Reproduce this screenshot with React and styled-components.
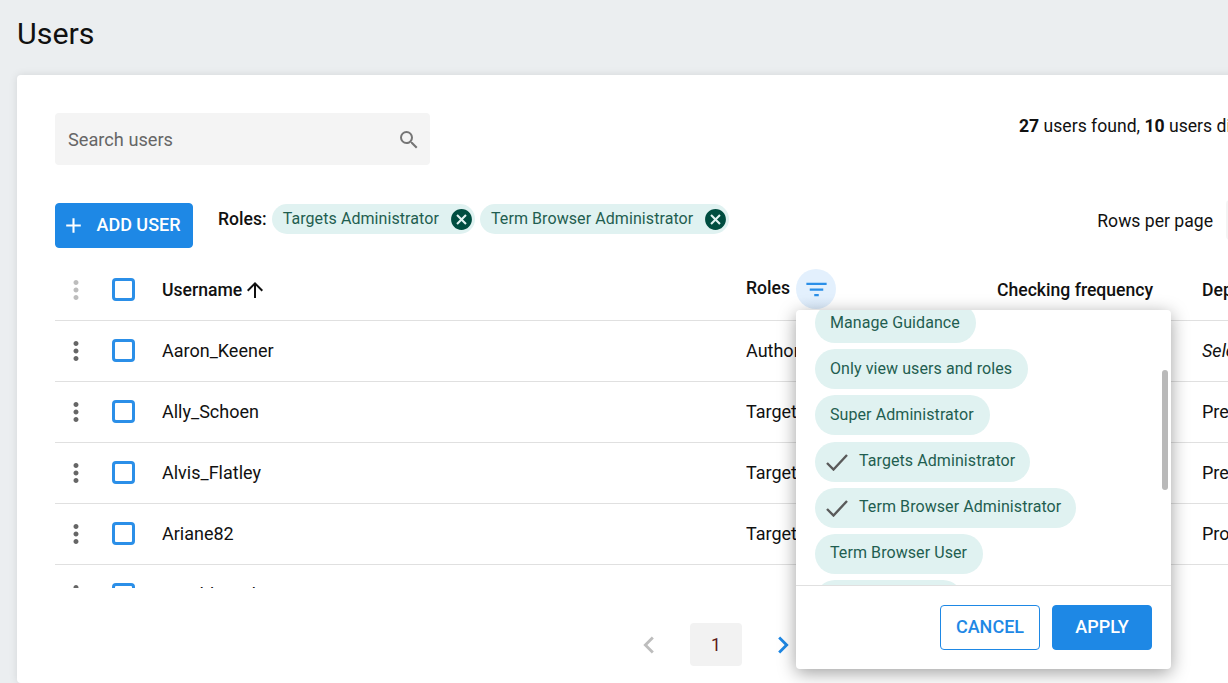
import styled, { createGlobalStyle } from 'styled-components'
import {
  MdAdd,
  MdArrowUpward,
  MdCancel,
  MdChevronLeft,
  MdChevronRight,
  MdFilterList,
  MdMoreVert,
  MdSearch
} from 'react-icons/md'

const users = [
  { name: 'Aaron_Keener', role: 'Authors', frequency: 'Daily', department: 'Select department', placeholder: true },
  { name: 'Ally_Schoen', role: 'Targets Administrator', frequency: 'Daily', department: 'Prevention' },
  { name: 'Alvis_Flatley', role: 'Targets Administrator', frequency: 'Daily', department: 'Prevention' },
  { name: 'Ariane82', role: 'Targets Administrator', frequency: 'Daily', department: 'Production' },
  { name: 'Arnaldo.Hahn', role: 'Targets Administrator', frequency: 'Daily', department: 'Production' }
]

const roleOptions = [
  { label: 'Manage Guidance' },
  { label: 'Only view users and roles' },
  { label: 'Super Administrator' },
  { label: 'Targets Administrator', selected: true },
  { label: 'Term Browser Administrator', selected: true },
  { label: 'Term Browser User' },
  { label: 'Translation User' }
]

const GlobalStyle = createGlobalStyle`
  html, body {
    margin: 0;
    height: 683px;
    overflow: hidden;
    background: #ebeef0;
    font-family: Roboto, "Liberation Sans", sans-serif;
    color: #111;
  }
`

const Page = styled.div`
  width: 1432px;
  height: 683px;
  padding-left: 17px;
  box-sizing: border-box;
`

const Title = styled.h1`
  margin: 0;
  height: 75px;
  line-height: 68px;
  font-size: 30.4px;
  font-weight: 400;
  color: #111;
`

const Card = styled.main`
  width: 1398px;
  height: 608px;
  box-sizing: border-box;
  padding: 38px 38px 0;
  background: #fff;
  border-radius: 4px;
  box-shadow: 0 0 8px rgba(0, 0, 0, 0.1);
`

const TopRow = styled.div`
  display: flex;
  height: 52px;
  margin-bottom: 38px;
`

const SearchBox = styled.div`
  width: 375px;
  height: 52px;
  box-sizing: border-box;
  padding: 1px 9px 0 13px;
  display: flex;
  align-items: center;
  justify-content: space-between;
  background: #f4f4f4;
  border-radius: 4px;
  color: #666;
  font-size: 18.2px;
  svg {
    color: #757575;
  }
`

const ResultCount = styled.div`
  margin-left: 589px;
  padding-top: 3px;
  font-size: 17.6px;
  b {
    font-weight: 700;
  }
`

const Toolbar = styled.div`
  display: flex;
  align-items: flex-start;
  height: 57px;
`

const PrimaryButton = styled.button`
  display: flex;
  align-items: center;
  justify-content: center;
  width: ${({ $width }) => $width}px;
  height: 45px;
  padding: 0 0 2px;
  border: 1px solid #1e88e5;
  border-radius: 4px;
  background: #1e88e5;
  color: #fff;
  font-family: inherit;
  font-size: 18px;
  font-weight: 500;
`

const OutlineButton = styled(PrimaryButton)`
  background: #fff;
  color: #1e88e5;
`

const AddIcon = styled(MdAdd)`
  margin: 2px 10px 0 -6px;
`

const FilterLabel = styled.span`
  margin: 6px 5px 0 25px;
  font-size: 17.6px;
  font-weight: 500;
  line-height: 20px;
`

const ActiveChip = styled.span`
  display: flex;
  align-items: center;
  height: 30px;
  box-sizing: border-box;
  margin: 1px 5px 0 0;
  padding: 0 1px 2px 11px;
  border-radius: 15px;
  background: #e0f2f1;
  color: #1f5e50;
  font-size: 16px;
  letter-spacing: 0.08px;
  svg {
    margin: 2px 0 0 10px;
    color: #004d40;
  }
`

const RowsPerPage = styled.div`
  margin: -3px 0 0 auto;
  display: flex;
  align-items: center;
  gap: 13px;
  font-size: 17.6px;
`

const RowsLabel = styled.span`
  margin-top: 2px;
`

const RowsSelect = styled.div`
  width: 151px;
  height: 40px;
  box-sizing: border-box;
  padding: 0 12px;
  display: flex;
  align-items: center;
  background: #f4f4f4;
  border-radius: 4px;
`

const Columns = styled.div`
  display: grid;
  grid-template-columns: 57px 50px 584px 251px 205px 1fr;
  align-items: center;
  height: 61px;
  box-sizing: border-box;
  border-bottom: 1px solid #e0e0e0;
  font-size: 18px;
`

const HeadRow = styled(Columns)`
  font-size: 17.6px;
  font-weight: 500;
`

const RowsViewport = styled.div`
  height: 267px;
  overflow: hidden;
`

const KebabCell = styled.div`
  width: 42px;
  display: flex;
  justify-content: center;
  color: ${({ $muted }) => ($muted ? '#bdbdbd' : '#666')};
`

const CheckBox = styled.span`
  display: block;
  width: 23px;
  height: 23px;
  margin-top: -2px;
  box-sizing: border-box;
  border: 3px solid #2b8fe8;
  border-radius: 4px;
`

const SortLabel = styled.div`
  display: flex;
  align-items: center;
  gap: 1px;
`

const RolesHead = styled.div`
  position: relative;
  display: flex;
  align-items: center;
  gap: 6px;
  margin-top: -2px;
`

const RolesText = styled.span`
  margin-top: -3px;
`

const FilterButton = styled.button`
  width: 40px;
  height: 40px;
  padding: 0;
  display: flex;
  align-items: center;
  justify-content: center;
  border: 0;
  border-radius: 50%;
  background: linear-gradient(#e3f0fd, #e3f0fd 70%, #dcecfc);
  color: #2b8fe8;
`

const CellText = styled.div`
  margin-top: -2px;
  white-space: nowrap;
  overflow: hidden;
  font-style: ${({ $italic }) => ($italic ? 'italic' : 'normal')};
`

const Popup = styled.div`
  position: absolute;
  z-index: 5;
  top: 41px;
  left: 50px;
  width: 375px;
  height: 359px;
  display: flex;
  flex-direction: column;
  background: #fff;
  border-radius: 4px;
  box-shadow: 0 4px 18px rgba(0, 0, 0, 0.38);
  font-weight: 400;
`

const PopupList = styled.div`
  position: relative;
  height: 275px;
  flex: none;
  overflow: hidden;
  border-bottom: 1px solid #e0e0e0;
`

const ChipStack = styled.div`
  display: flex;
  flex-direction: column;
  align-items: flex-start;
  gap: 6.2px;
  margin-top: -7px;
  padding-left: 19px;
`

const OptionChip = styled.span`
  display: flex;
  align-items: center;
  flex: none;
  height: 40px;
  box-sizing: border-box;
  padding: ${({ $selected }) => ($selected ? '0 15px 3px 11px' : '0 16px 2px 15px')};
  border-radius: 20px;
  background: #e0f2f1;
  color: #1f5e50;
  font-size: 16px;
  letter-spacing: 0.08px;
`

const CheckMark = styled.svg`
  width: 22px;
  height: 18px;
  margin: 3px 11px 0 0;
  fill: none;
  stroke: #5a5a5a;
  stroke-width: 2.4;
`

const ScrollThumb = styled.div`
  position: absolute;
  top: 60px;
  right: 3px;
  width: 6px;
  height: 120px;
  border-radius: 3px;
  background: #b9b9b9;
`

const PopupFooter = styled.div`
  display: flex;
  justify-content: flex-end;
  gap: 12px;
  padding: 19px 19px 0 0;
`

const Pagination = styled.nav`
  display: flex;
  justify-content: center;
  align-items: center;
  gap: 24px;
  margin-top: 35px;
  height: 43px;
`

const PageArrow = styled.span`
  display: flex;
  color: ${({ $disabled }) => ($disabled ? '#bdbdbd' : '#1e88e5')};
`

const PageNumber = styled.span`
  width: 52px;
  height: 43px;
  display: flex;
  align-items: center;
  justify-content: center;
  background: #f2f2f2;
  border-radius: 4px;
  color: #5c1a1a;
  font-size: 17.6px;
`

const App = () => (
  <Page>
    <GlobalStyle />
    <Title>Users</Title>
    <Card>
      <TopRow>
        <SearchBox>
          Search users
          <MdSearch size={24} />
        </SearchBox>
        <ResultCount>
          <b>27</b> users found, <b>10</b> users displayed
        </ResultCount>
      </TopRow>
      <Toolbar>
        <PrimaryButton $width={138}>
          <AddIcon size={25} />
          ADD USER
        </PrimaryButton>
        <FilterLabel>Roles:</FilterLabel>
        <ActiveChip>
          Targets Administrator
          <MdCancel size={25} />
        </ActiveChip>
        <ActiveChip>
          Term Browser Administrator
          <MdCancel size={25} />
        </ActiveChip>
        <RowsPerPage>
          <RowsLabel>Rows per page</RowsLabel>
          <RowsSelect>10</RowsSelect>
        </RowsPerPage>
      </Toolbar>
      <HeadRow>
        <KebabCell $muted>
          <MdMoreVert size={30} />
        </KebabCell>
        <CheckBox />
        <SortLabel>
          Username
          <MdArrowUpward size={24} />
        </SortLabel>
        <RolesHead>
          <RolesText>Roles</RolesText>
          <FilterButton>
            <MdFilterList size={27} />
          </FilterButton>
          <Popup>
            <PopupList>
              <ChipStack>
                {roleOptions.map((option) => (
                  <OptionChip key={option.label} $selected={option.selected}>
                    {option.selected && (
                      <CheckMark viewBox='0 0 22 18'>
                        <path d='M1 10l6.5 6.5L21 2' />
                      </CheckMark>
                    )}
                    {option.label}
                  </OptionChip>
                ))}
              </ChipStack>
              <ScrollThumb />
            </PopupList>
            <PopupFooter>
              <OutlineButton $width={100}>CANCEL</OutlineButton>
              <PrimaryButton $width={100}>APPLY</PrimaryButton>
            </PopupFooter>
          </Popup>
        </RolesHead>
        <div>Checking frequency</div>
        <div>Department</div>
      </HeadRow>
      <RowsViewport>
        {users.map((user) => (
          <Columns key={user.name}>
            <KebabCell>
              <MdMoreVert size={30} />
            </KebabCell>
            <CheckBox />
            <CellText>{user.name}</CellText>
            <CellText>{user.role}</CellText>
            <CellText>{user.frequency}</CellText>
            <CellText $italic={user.placeholder}>{user.department}</CellText>
          </Columns>
        ))}
      </RowsViewport>
      <Pagination>
        <PageArrow $disabled>
          <MdChevronLeft size={34} />
        </PageArrow>
        <PageNumber>1</PageNumber>
        <PageArrow>
          <MdChevronRight size={34} />
        </PageArrow>
      </Pagination>
    </Card>
  </Page>
)

export default App
